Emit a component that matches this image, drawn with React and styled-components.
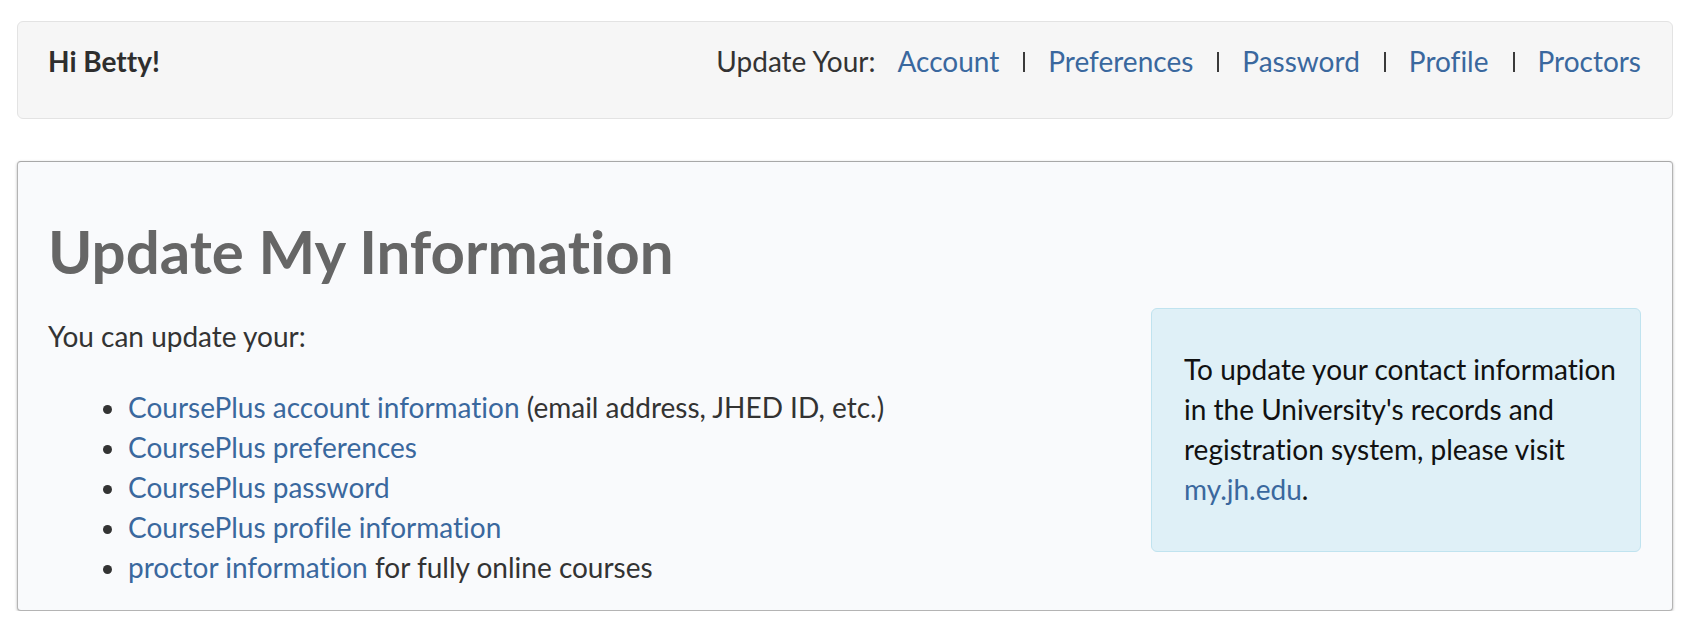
import React from 'react';
import styled, { createGlobalStyle } from 'styled-components';

const GlobalStyle = createGlobalStyle`
  html, body {
    margin: 0;
    padding: 0;
    background: #ffffff;
  }
  body {
    font-family: Lato, "Liberation Sans", Arial, sans-serif;
    font-size: 28px;
    line-height: 40px;
    color: #333333;
    font-variant-ligatures: none;
    font-feature-settings: "liga" 0;
  }
  a {
    color: #3a689e;
    text-decoration: none;
  }
`;

const Page = styled.div`
  padding: 21px 19px 0 17px;
`;

const Well = styled.div`
  display: flex;
  justify-content: space-between;
  align-items: baseline;
  padding: 19px 31px 37px 30px;
  background: #f6f6f6;
  border: 1px solid #e3e3e3;
  border-radius: 6px;
`;

const Greeting = styled.strong`
  font-weight: 700;
  color: #2e2e2e;
`;

const Nav = styled.nav`
  display: flex;
  align-items: baseline;
`;

const NavLabel = styled.span`
  margin-right: 22px;
`;

const Sep = styled.span`
  display: inline-block;
  width: 2px;
  height: 20px;
  margin: 0 23px 0 24px;
  background: #3a3a3a;
`;

const Panel = styled.section`
  margin-top: 42px;
  padding: 0 31px 23px 30px;
  background: #f9fafc;
  border: 1px solid #b4b4b4;
  border-top-color: #a8a8a8;
  border-radius: 4px;
  box-shadow: 0 1px 3px rgba(0, 0, 0, 0.28);
`;

const Title = styled.h1`
  margin: 0;
  padding-top: 56px;
  font-size: 60px;
  line-height: 66px;
  font-weight: 700;
  color: #666666;
`;

const Row = styled.div`
  display: flex;
  justify-content: space-between;
  align-items: flex-start;
  margin-top: 24px;
`;

const Lead = styled.p`
  margin: 8px 0 31px;
`;

const List = styled.ul`
  margin: 0;
  padding-left: 80px;
`;

const InfoBox = styled.div`
  width: 426px;
  padding: 40px 30px 42px 32px;
  background: #dff0f7;
  border: 1px solid #c0e3ef;
  border-radius: 6px;
  color: #111111;
  white-space: nowrap;
`;

const links = ['Account', 'Preferences', 'Password', 'Profile', 'Proctors'];

export default function App() {
  return (
    <>
      <GlobalStyle />
      <Page>
        <Well>
          <Greeting>Hi Betty!</Greeting>
          <Nav>
            <NavLabel>Update Your:</NavLabel>
            {links.map((name, i) => (
              <React.Fragment key={name}>
                {i > 0 && <Sep aria-hidden="true" />}
                <a href="#">{name}</a>
              </React.Fragment>
            ))}
          </Nav>
        </Well>
        <Panel>
          <Title>Update My Information</Title>
          <Row>
            <div>
              <Lead>You can update your:</Lead>
              <List>
                <li><a href="#">CoursePlus account information</a> (email address, JHED ID, etc.)</li>
                <li><a href="#">CoursePlus preferences</a></li>
                <li><a href="#">CoursePlus password</a></li>
                <li><a href="#">CoursePlus profile information</a></li>
                <li><a href="#">proctor information</a> for fully online courses</li>
              </List>
            </div>
            <InfoBox>
              To update your contact information<br />
              in the University's records and<br />
              registration system, please visit<br />
              <a href="#">my.jh.edu</a>.
            </InfoBox>
          </Row>
        </Panel>
      </Page>
    </>
  );
}
